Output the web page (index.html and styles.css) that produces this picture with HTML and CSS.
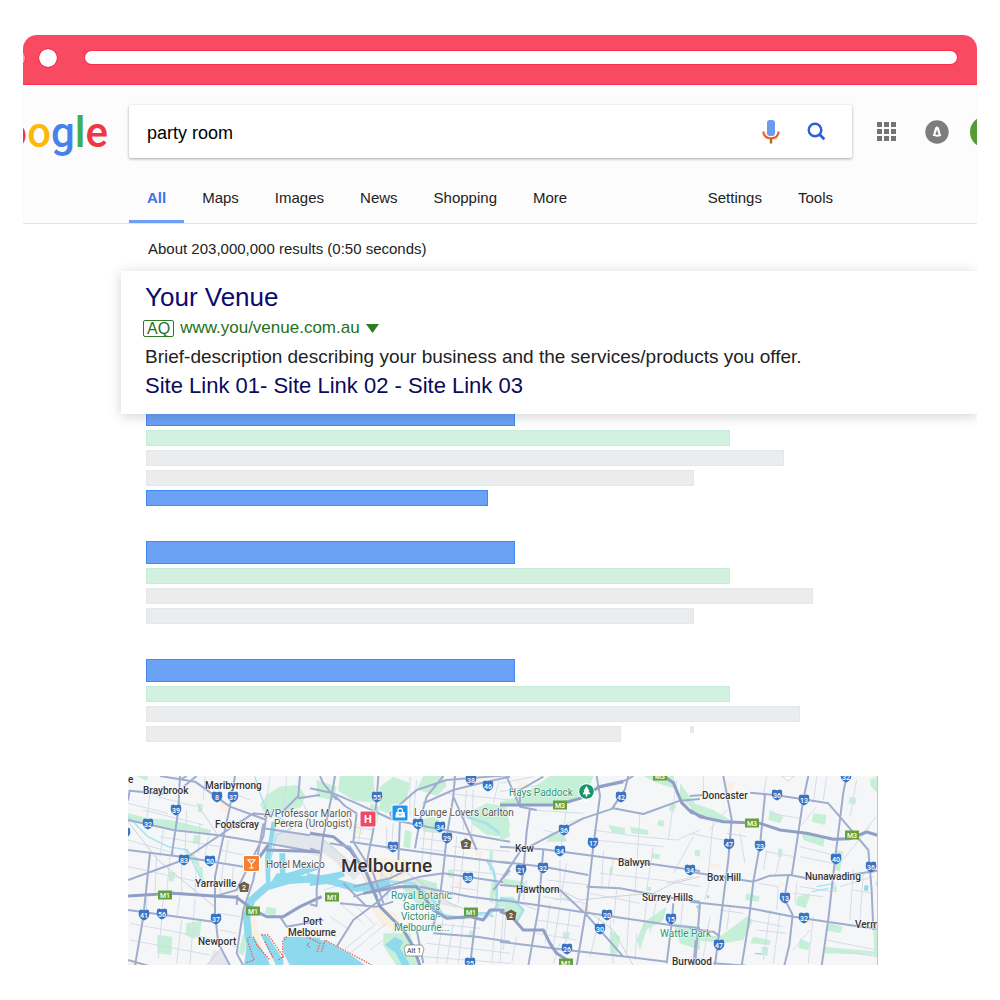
FILE: index.html
```html
<!DOCTYPE html>
<html lang="en">
<head>
  <meta charset="UTF-8" />
  <meta name="viewport" content="width=device-width, initial-scale=1.0" />
  <title>party room</title>
  <link rel="stylesheet" href="styles.css">
</head>
<body>
  <div class="browser">
    <div class="titlebar">
      <span class="dot dot-faded"></span>
      <span class="dot"></span>
      <span class="address"></span>
    </div>

    <header class="header">
      <div class="top">
        <a class="logo" href="#"><span class="red">o</span><span class="yellow">o</span><span class="blue">g</span><span class="green">l</span><span class="red">e</span></a>
        <form class="search">
          <input type="text" aria-label="Search" value="party room" />
          <button type="button" aria-label="Voice search">
            <svg width="18" height="24" viewBox="0 0 18 24">
              <rect x="5" y="0" width="8" height="16" rx="3" fill="#6a9bf0"/>
              <path d="M1.200 11.500c.6 4.600 4 6.800 7.800 6.800s7.200-2.200 7.800-6.800" fill="none" stroke="#f4622d" stroke-width="2.200"/>
              <path d="M9 18.500v5" stroke="#b06a1c" stroke-width="2.400"/>
            </svg>
          </button>
          <button type="button" aria-label="Search">
            <svg width="19" height="20" viewBox="0 0 19 20">
              <circle cx="8" cy="8" r="6.300" fill="none" stroke="#2c5fd8" stroke-width="2.400"/>
              <path d="M12.300 12.300L17.300 17.300" stroke="#2c5fd8" stroke-width="2.800"/>
            </svg>
          </button>
        </form>
        <button class="apps" type="button" aria-label="Apps">
          <svg width="19" height="20" viewBox="0 0 19 20" fill="#737373">
            <path d="M0 0h5v5H0zM7 0h5v5H7zM14 0h5v5h-5zM0 7h5v5H0zM7 7h5v5H7zM14 7h5v5h-5zM0 14h5v5H0zM7 14h5v5H7zM14 14h5v5h-5z"/>
          </svg>
        </button>
        <button class="bell" type="button" aria-label="Notifications">
          <svg width="24" height="24" viewBox="0 0 24 24">
            <circle cx="12" cy="12" r="11.700" fill="#7d7d7d"/>
            <path d="M12 6.500c-1.500 0-2.300 2-2.800 4.500-.3 1.800-.8 3.200-1.500 4.500 1.200.8 2.500 1.200 4.300 1.200s3.100-.4 4.300-1.200c-.7-1.300-1.200-2.700-1.500-4.500-.5-2.500-1.300-4.500-2.800-4.500z" fill="#fff"/>
            <path d="M12 9.500l1.600 5.300h-3.200z" fill="#7d7d7d"/>
          </svg>
        </button>
        <span class="avatar"></span>
      </div>
      <nav class="tabs">
        <a class="active" href="#">All</a>
        <a href="#">Maps</a>
        <a href="#">Images</a>
        <a href="#">News</a>
        <a href="#">Shopping</a>
        <a href="#">More</a>
        <a class="push" href="#">Settings</a>
        <a href="#">Tools</a>
      </nav>
    </header>

    <main>
      <p class="stats">About 203,000,000 results (0:50 seconds)</p>

      <section class="ad">
        <h2><a href="#">Your Venue</a></h2>
        <div class="ad-url">
          <span class="badge">AQ</span>
          <a href="#">www.you/venue.com.au</a>
          <svg width="13" height="9" viewBox="0 0 13 9"><path d="M0 0h13L6.500 9z" fill="#2f7a24"/></svg>
        </div>
        <p>Brief-description describing your business and the services/products you offer.</p>
        <div class="sitelinks"><a href="#">Site Link 01</a>- <a href="#">Site Link 02</a> - <a href="#">Site Link 03</a></div>
      </section>

      <div class="results">
        <div class="result">
          <div class="bar title"></div>
          <div class="bar url"></div>
          <div class="bar text long"></div>
          <div class="bar text short"></div>
          <div class="bar links"></div>
        </div>
        <div class="result">
          <div class="bar title"></div>
          <div class="bar url"></div>
          <div class="bar text longest"></div>
          <div class="bar text short"></div>
        </div>
        <div class="result">
          <div class="bar title"></div>
          <div class="bar url"></div>
          <div class="bar text longer"></div>
          <div class="last-row">
            <div class="bar text shortest"></div>
            <div class="speck"></div>
          </div>
        </div>
      </div>

      <svg class="map" viewBox="128 776 750 189" role="img" aria-label="Map of Melbourne">
        <rect x="128" y="776" width="750" height="189" fill="#f5f6f8"/>

        <!-- west -->
        <g transform="translate(120 770) scale(.3333)">
          <path class="park" d="M420 105l20-30 40-25 55-5 20 30-10 35-50 15-60 5zM24 130l60 15 70 5 120 30-5 10-150-20-95-15zM222 195l20 3-2 25-22-3zM235 100l14 3-4 25-12-3zM148 305l18 3-5 27-15-2zM112 495l45 5-3 55-42-5zM200 460l45-8-6 45-18 10-25-12zM232 290l15 0 5 50-10 5zM370 490l15 15-15 50-15-5zM50 18h35l-5 15zM195 235l40 30 5 30-35-30zM440 410l30 5-5 25-30-10zM590 30l60 20-10 40-50-10z"/>
          <path class="sand" d="M385 430l20 10 30 130-25 10-20-80zM24 572l40 6v10H24zM300 85l25 15-5 30-20-10z"/>
          <path class="urban" d="M465 175l135 25v60l-110-30-40-20zM280 540l25 5 20 42h-60zM520 195h80v30z"/>
          <path class="minor" d="M24 60l100 15M70 120l180 45M90 65l-10 90M110 80l120 30M120 260l10-80M120 200l180 30M200 120l-5 130M240 160l-5 90M255 20l-5 70M265 200l-10 60M24 210l140 40M24 290l140 30 120 25M110 255l-5 110M150 260l-10 110M185 270v100M230 270l-5 100M180 380l-10 65M130 385l-15 180M225 385l-15 200M30 460l240 45M30 510l240 45M80 385v50M185 450l-15 130M300 430l60 10M300 480l50 10M305 520l45 10M310 280l-10 90M340 290l-5 65M24 100l120 30M300 240l70 15M390 90l-50-20M450 20l-15 100M500 20l-10 120M360 150l60 15M325 210l-10 70M545 90l40 90"/>
          <path class="rail" d="M24 155l90 115 175 145M230 100l60 90M300 540l-40 47"/>
          <path class="creek" d="M24 140l60 60 60 30 60 10M405 20l15 50 20 50 50 30 25 25-45 20-15 60-15 80M200 240l30 60 20 40"/>
          <path class="water" d="M438 340l-3-80 12-55 8-50 14 0-10 60-8 50 0 80zM455 335l15-25 10 0-2-60 18 0 0 60 20-5 60-20 24 12-60 20-20 25z"/>
          <path class="river" d="M620 325l-110 5-70 20-45 40-15 50 5 60 20 60"/>
          <path class="water" d="M380 520l20-20 40 60 12 30h-80zM420 490l25 10 45 70 0 20-20 0zM490 500h30l80 3v84h-90l-20-40z"/>
          <path class="dotted" d="M390 500l-8 10 20 60-28 10M400 500l10 25 40 45M425 495l20 0 45 65-15 10M435 515l25 50M500 500l-12 15 0 50M560 500l20 10-20 15 40 30"/>
          <path class="road" d="M24 92l5-30 100 10M120 18l105 17 105 75 110 40M24 150l136 30 130 15 150 25 160 28M180 18l-5 102-20 137M345 18l-15 92-20 90-25 120v110l10 90 35 67M24 240l171 22 175 28M24 330l166-60 110-75 100-65 60 5M24 420l256 35M90 250l-20 190-25 147M24 570l60 17M430 160l-30 170-30 90-20 130 20 37M540 18l-5 60-50 50M600 75l-65 10M280 380l70-20 50-100 30-60 10-70M180 30l20-12M190 50l40-32M480 440l20 30 110-20M430 175l170 25M350 405l2-30"/>
          <path class="highway" d="M24 378l136-8 120 8 70 4 50 38 40 20h50l50-30 65-30M440 240l160 5M390 300l55-75"/>
        </g>

        <!-- city -->
        <g transform="translate(310 770) scale(.3333)">
          <path class="park" d="M90 18h100l5 80-60-5-50-30zM210 50l40-30 50 20-10 50-60 40-20-10zM340 18h60l10 30-30 30-60-20zM330 150l40-10 30 20-10 30-50-5zM470 130l60-30 60 10 10 60-20 30-50-5-40-30zM285 180l20 5-5 50-20-5zM310 320l70 20 10 80-60-10-50-50 0-30zM220 490l80 0 30 97h-70l-40-60zM180 100l30 10-10 60-15-5zM540 240l10 5-5 60-8-5zM555 390l45-5v20l-40 10zM480 480l15 5 0 20-20-5zM545 335l15 5-10 60-12-5zM415 300l15 3-2 20-14-2z"/>
          <path class="sand" d="M140 270l40-10 110 10 10 40-60 40-70-20zM180 410l80 20 10 50-50-10zM130 160l35 5-5 30-30-5zM435 330l25 5-5 20-20-5zM495 240l25 5-5 15-20-5z"/>
          <path class="urban" d="M0 180l60 40 90 90-20 20-60-60-70-50zM300 320l80 60 60 25 0 10-80-20-60-55z"/>
          <path class="minor" d="M230 170v70M250 160l-5 70M345 160l-10 130M370 160l-10 130M440 200l-15 190M465 200l-20 200M430 230l170 15M420 300l180 15M420 350l80 10M330 205l80 10M330 235l80 10M470 60l-10 120M490 60l-5 130M300 20v120M320 30l-10 110M410 70l190 20M130 170l60 10M130 200l60 10M155 160l-10 60M220 290l-20 100M250 290l-20 100M180 290l90 60M90 400l70 60M60 440l60 40M130 400l60 60M100 540l100-80M120 550l110-90M180 540l80-60M400 440l-20 140M430 460l-20 120M460 450l-15 130M360 460l150 15M350 520l250 30M340 560l260 20M560 420l-15 160M580 420l-10 160M40 360l70-20M20 480l60 20M510 260l-10 140M570 20l-20 80"/>
          <path class="rail" d="M40 210l110 90 50 90M280 300l140 100 100 40"/>
          <path class="river" d="M-10 320l80 15 70 20 100-15"/>
          <path class="creek wide" d="M240 335l70 5 50 40 40 55 60 10 30-15 40 0 20 10M470 140l60 20 40 30M530 270l20 30 10 50 0 60-35 35"/>
          <path class="water" d="M0 330l40-15 60-12 5 15-60 25-45 5zM225 525l30-25 25 15-10 20 25 40 8 25-25-10-20-40zM0 503l50 10 70 40 55 40H0z"/>
          <path class="dotted" d="M0 505l30 15-10 30M35 545l10-35 140 75"/>
          <path class="road" d="M75 18l-10 60-25 120-20 160 0 50-20-5M0 55l70 15 70 30 110 50 150 30 200 35M205 18l-5 72-10 90-20 100M80 90l-40-50-10-22M120 215l130 20 150 20 200 25M435 18l-5 62-20 120-10 100-15 120-20 60M400 18l-50 62-20 70-15 85M250 150l-10-20 80-70 90-30 190-15M430 80l40 90 30 70M340 100l90-40 80-20 90-20M130 380l200-60 70-10 200 30M330 350l150 30 120 15M370 490l130 10 100 15M500 420l-20 167M80 530l50-80 80-60M130 350l110-25 60-30M140 130l-10 85 60 95 30 90M270 150l-5 120M90 400l110 10 50-15M100 340l70 70M320 480l20 100M600 300l-50 60M75 78l30 30 35 22"/>
          <path class="highway" d="M0 190l70 10 50 40 50 70 40 100 70 70 30 50 20 57M160 370l110-20 50 0 50 70 40 25 70-5 40 10 20-30 60 0"/>
          <path class="road" d="M60 220l60 10 50 80M200 400l50-50M0 235l30 10"/>
        </g>

        <!-- inner east -->
        <g transform="translate(500 770) scale(.3333)">
          <path class="park" d="M0 95l60-15 90-62h130l-20 60-70 30-90 0-100 0zM430 18h90l10 40-60-20zM0 130l20 10 10 60-30 10zM150 190l45 5 5 20-60 0zM325 165l50 10 0 20-40-10zM390 170l55 10 0 15-50-5zM475 150l18 2-3 18-18-3zM455 250l25 3-3 15-22-3zM190 485l20 3-3 20-20-3zM5 325l70 10 0 15-60 0zM0 380l40 0 30 40-20 30-30-10zM430 460l40-30 30-20-10 40-50 30-20 60-10-30zM520 460l80 10v70l-60-20zM330 480l30 20-10 60-20-10zM540 40l60 80v20l-60-60zM585 240l15 0v20l-15-3zM330 290l10 2-3 20-10-2zM440 350l15 2-2 12-15-2zM510 100l20 5-10 20-14-5zM150 390l60-10 0 10zM590 410l10 0v20l-8-3z"/>
          <path class="sand" d="M245 400l25 5-5 20-22-3zM50 30l35 10-5 20-25-5z"/>
          <path class="minor" d="M200 110l-20 150M200 160l95-30M90 120l160 10M420 130l-15 240M280 180l140 20 110 10 70-30M310 240l-5 120M340 270l-15 80M530 30l-25 180M280 210l210 20M460 230l-20 130M300 310l180 20 120 20M130 180l60 15M180 270v110M200 280l-20 120M140 330l130 15M80 330l-10 60M130 380l130 20M390 370l-10 180M440 390l-10 100M350 360l-10 100M270 370l150 30M330 450l10 130M300 440l-30 120M60 400l50 20M150 400l-15 120M180 410l-20 120M210 420l-15 120M110 450l130 20M110 490l120 20M470 390l-20 100M550 380l-10 110M20 410l-10 130M50 500l-15 80M410 490l-5 80M500 340l80-20M580 200l-60 110M0 40l100-20M0 65l120-20M180 520l-20 60"/>
          <path class="rail" d="M70 350l110 10 60 30 100-10 120-10 60-30 80-20M260 420l80 60 60 107"/>
          <path class="creek wide" d="M0 385l40 5 30 30-20 35"/>
          <path class="road" d="M0 230l130 8 225 30 245 35M0 275l130 15 135 25M90 115l-10 70-10 120-15 90M130 238l-15 180-30 169M0 335l60-90 190-100 90-30 90 17 110-40 60-5M290 18l10 60-20 150-20 180-30 179M0 345l180 15 80 75 110 125M0 390l110 15 130 20 270 40 90 10M260 350l100 5 160 30 80 10M0 515l200 25 180 20 120 15M520 400l-5 60-15 120M590 480l-10 107M290 50l90-20 20-12M385 18l-10 40-40 60M20 20l40 90 50 10M60 100l0-40 70-40"/>
          <path class="highway" d="M0 105l170 0 70-20 60-35 70-15M0 425l30 10 40 45 60 0 20 40 20 30 40 25M490 18l30 20 25 60 30 30 40 10"/>
        </g>

        <!-- outer east -->
        <g transform="translate(690 770) scale(.3333)">
          <path class="park" d="M10 100l60 20 60 35-40 0-80-30zM370 130l40 5-5 30-40-10zM335 190l70 15-5 25-60-20zM90 500l80-60 20 10-30 60-60 10-90-10 0-20zM190 500l50 10 0 15-60-5zM215 530l20 2-3 25-17-3zM322 380l40-10-15 45-30-10zM420 460l40 10-10 20-45-10zM400 530l163 15v10l-163-5zM265 235l13 2-2 25-13-2zM170 370l40 10-5 15-40-5zM440 240l20 5-10 60-15-5zM480 80l20 5-5 20-20-5zM540 30l20-12 2 50-20-20zM240 120l40 20-10 20-35-10zM330 505l30 15-5 20-30-5zM550 480l13 2v80l-10 0zM430 345l10 2 0 20-10-2z"/>
          <path class="sand" d="M110 35l22 5-5 25-20-5zM60 280l30 4-5 10-25-4zM350 445l20 5-5 15-20-5zM270 335l15 5-5 10-14-4zM545 18l15 2-5 8z"/>
          <path class="minor" d="M70 150l-15 160M150 190l15 90M110 190l60 10M60 180l50-60M0 190l100 20M230 240l-10 60M270 260l-15 60M225 245l90 15M330 230l100 25M330 260l100 20M205 340l60 10-5 70M310 370l90 10M320 340l-5 60M330 350l100 15M370 440l-15 140M240 420l-20 150M270 430l-20 150M200 480l90 10M120 410l-10 70M60 330l-15 60M90 420l70 10M180 450l100 20M360 480l-50 60M430 540l130 20M410 510l150 30M490 300l-10 150M520 310l-10 140M490 360l60 10M380 110l-50 60M230 20l-10 60M240 130l90 15M540 170l-90 110M560 140l-60 70M450 350l100-30M60 440l-20 120M40 20v60M410 20l-10 70M380 20l-10 80M500 30l-20 110M0 560l60 10"/>
          <path class="creek" d="M365 365l50-10M380 350l55-10"/>
          <path class="water" d="M524 345l12 3-3 16-11-3zM20 405l8 2-3 8-6-2zM52 375l6 2-1 8-6-1zM195 548l20 2v4l-20-2z"/>
          <path class="road" d="M0 78l40-3M180 68l80 8 80 12 75 12 60 70 60 70 10 120 5 120M100 18l25 130-10 120-25 200-15 117M225 75l-15 150-20 110-15 130-20 122M355 18l-15 70-15 100-20 130M470 18l-10 50-25 200-20 180-20 139M0 305l60 10 130 20 50-18 60-2 50 10 90-5 123-18M0 395l180 20 130 25 100 15 150 22M295 315l-12 70 25 50-10 90-15 62M30 400l-15 187M0 475l70 10 20 15M70 580l100 7"/>
          <path class="highway" d="M0 120l30 20 70 15 110 5 60 20 80 10 80 18 50-2 50-20 33 10"/>
        </g>

        <g class="labels">
          <text x="128" y="783">e</text>
          <text x="143" y="794">Braybrook</text>
          <text x="205" y="789">Maribyrnong</text>
          <text x="215" y="828">Footscray</text>
          <text x="195" y="887">Yarraville</text>
          <text x="198" y="945">Newport</text>
          <text x="303" y="925">Port</text>
          <text x="288" y="936">Melbourne</text>
          <text x="515" y="852">Kew</text>
          <text x="516" y="893">Hawthorn</text>
          <text x="618" y="866">Balwyn</text>
          <text x="642" y="901">Surrey Hills</text>
          <text x="702" y="799">Doncaster</text>
          <text x="707" y="881">Box Hill</text>
          <text x="805" y="880">Nunawading</text>
          <text x="855" y="928">Verm</text>
          <text x="672" y="965">Burwood</text>
          <text class="city" x="341" y="872">Melbourne</text>
          <g class="place">
            <text x="264" y="817">A/Professor Marlon</text>
            <text x="274" y="827">Perera (Urologist)</text>
            <text x="266" y="868">Hotel Mexico</text>
            <text x="414" y="816">Lounge Lovers Carlton</text>
          </g>
          <g class="green-place">
            <text x="509" y="796">Hays Paddock</text>
            <text x="391" y="899">Royal Botanic</text>
            <text x="403" y="910">Gardens</text>
            <text x="401" y="920">Victoria -</text>
            <text x="394" y="931">Melbourne...</text>
            <text x="660" y="937">Wattle Park</text>
          </g>
        </g>

        <g id="shields"></g>

        <g>
          <path d="M406 945h16l2 4-2 7h-16l-2-7z" fill="#fff" stroke="#777" stroke-width=".7"/>
          <text class="alt" x="414" y="953">Alt 1</text>
          <rect x="359.500" y="810.500" width="17" height="17" rx="2" fill="#fff"/>
          <rect x="360.500" y="811.500" width="15" height="15" rx="1" fill="#f04866"/>
          <text class="hospital" x="368" y="823">H</text>
          <rect x="391.500" y="804.500" width="17" height="17" rx="2" fill="#fff"/>
          <rect x="392.500" y="805.500" width="15" height="15" rx="1" fill="#1897f2"/>
          <path d="M396 812h8.500l.8 5.500h-10z" fill="#fff"/>
          <path d="M398 812v-1.500a2.200 2.200 0 014.400 0v1.500" fill="none" stroke="#fff" stroke-width="1.200"/>
          <path d="M398.400 813.500c.6 2 3 2 3.600 0" fill="none" stroke="#1897f2" stroke-width=".8"/>
          <rect x="243" y="855" width="17" height="17" rx="2" fill="#fff"/>
          <rect x="244" y="856" width="15" height="15" rx="1" fill="#f58233"/>
          <path d="M248 859.800h7l-3.500 4zM251.500 863.500v4.500M249.300 868h4.400" fill="none" stroke="#fff" stroke-width="1.100"/>
          <path d="M586.500 803l-4-5h8z" fill="#fff"/>
          <circle cx="586.500" cy="791.500" r="8.300" fill="#fff"/>
          <circle cx="586.500" cy="791.500" r="7.300" fill="#15976b"/>
          <path d="M586.500 786l3 5h-1l2 3.300h-3.200v2.200h-1.600v-2.200h-3.200l2-3.300h-1z" fill="#fff"/>
          <path d="M782 776h12l-6 5z" fill="#fff" stroke="#bbb" stroke-width=".6"/>
          <path d="M877.500 776v189" stroke="#a8dba8"/>
        </g>
      </svg>
    </main>
  </div>

  <script>
    // [x, y, route number]
    const routes = [
      [217, 797, 8], [233, 797, 37], [176, 810, 39], [148, 824, 32], [184, 860, 83], [210, 861, 50],
      [144, 915, 41], [162, 914, 56], [216, 919, 37], [377, 797, 55], [471, 780, 38], [488, 786, 46],
      [418, 824, 45], [440, 827, 34], [447, 838, 29], [393, 847, 32], [468, 878, 30], [564, 830, 36],
      [621, 797, 42], [593, 843, 17], [560, 851, 34], [521, 870, 21], [543, 868, 32], [607, 915, 20],
      [600, 929, 30], [567, 949, 26], [470, 963, 25], [690, 870, 34], [671, 919, 15], [777, 795, 36],
      [804, 800, 13], [846, 777, 32], [729, 844, 47], [760, 846, 23], [836, 859, 40], [871, 867, 36],
      [785, 898, 13], [804, 918, 32], [719, 945, 47], [125, 833, ''], [882, 885, '']
    ];
    const motorways = [
      [165, 895, 'M1'], [253, 911, 'M1'], [332, 897, 'M1'], [471, 912, 'M1'], [566, 963, 'M1'],
      [560, 805, 'M3'], [752, 823, 'M3'], [852, 835, 'M3'], [660, 776, 'M3']
    ];
    const tourist = [[244, 887, 2], [466, 844, 2], [511, 915, 2]];

    function draw(list, shape, cls) {
      return list.map(([x, y, label]) =>
        `<g class="${cls}" transform="translate(${x} ${y})"><path d="${shape}"/><text y="3">${label}</text></g>`
      ).join('');
    }

    document.getElementById('shields').innerHTML =
      draw(routes, 'M-5-4.500L-3-5.500L0-4.800L3-5.500L5-4.500L5.300 0Q4.500 3.500 0 5.500Q-4.500 3.500-5.300 0z', 'route') +
      draw(motorways, 'M-7-4.500H7v9H-7z', 'motorway') +
      draw(tourist, 'M0-5.500L5.500-2.500L4 5H-4L-5.500-2.500z', 'tourist');
  </script>
</body>
</html>
```
FILE: styles.css
```css
* { box-sizing: border-box; margin: 0; padding: 0; }
body { font-family: "Liberation Sans", Arial, sans-serif; background: #fff; color: #222; padding: 35px 23px; }
a { color: inherit; text-decoration: none; }
button { border: none; background: none; cursor: pointer; }
svg { display: block; }

.browser { overflow: hidden; border-radius: 14px 14px 0 0; }

.titlebar { height: 50px; background: #f84b62; border-bottom: 1px solid #fa2d4b; display: flex; align-items: center; padding: 0 20px 4px 0; }
.dot { width: 20px; height: 20px; border-radius: 50%; background: #fff; border: 1px solid #fa2d4b; background-clip: padding-box; }
.dot-faded { background: #fba0ab; margin: 0 12px 0 -17px; }
.address { flex: 1; height: 13px; margin-left: 27px; border-radius: 7px; background: #fff; box-shadow: 0 0 0 1px #fa2d4b; }

.header { background: #fcfcfc; border-bottom: 1px solid #e4e4e4; padding-top: 20px; }
.top { display: flex; align-items: center; }
.logo { width: 85px; padding-top: 3px; display: flex; justify-content: flex-end; font-family: Roboto, sans-serif; font-weight: 500; font-size: 42px; line-height: 50px; }
.blue { color: #4682e8; }
.red { color: #ee3840; }
.yellow { color: #fdb90a; }
.green { color: #3fae55; }

.search { flex: 1; height: 53px; margin: 0 25px 0 21px; padding: 0 26px 0 18px; display: flex; align-items: center; background: #fff; border-radius: 2px; box-shadow: 0 1px 3px rgba(0,0,0,0.35); }
.search input { flex: 1; min-width: 0; padding-top: 3px; border: none; outline: none; background: none; font-family: inherit; font-size: 18px; color: #000; }
.search button { margin-left: 27px; }
.bell { margin: 0 21px 0 29px; }
.avatar { width: 32px; height: 32px; margin-right: -25px; border-radius: 50%; background: #559a33; }

.tabs { display: flex; margin: 15px 126px 0 106px; font-size: 15px; }
.tabs a { padding: 0 18px; line-height: 50px; }
.tabs .active { color: #3c74e6; font-weight: bold; box-shadow: inset 0 -3px #6a9ff5; }
.tabs .push { margin-left: auto; }

.stats { padding: 15px 0 0 125px; font-size: 15px; line-height: 20px; height: 47px; }

.ad { position: relative; margin-left: 98px; padding: 10px 24px 13px; background: #fff; box-shadow: 0 2px 12px rgba(0,0,0,0.18); }
.ad h2 { font-size: 26px; font-weight: normal; line-height: 32px; color: #0a0a70; }
.ad-url { display: flex; align-items: center; gap: 6px; margin-left: -2px; font-size: 17px; line-height: 30px; color: #26701c; }
.badge { border: 1px solid #2f7a24; border-radius: 2px; padding: 0 3px; font-size: 16px; line-height: 15px; }
.ad p { font-size: 19px; line-height: 28px; }
.sitelinks { font-size: 22px; line-height: 30px; color: #0a0a5c; }

.results { margin: -11px 0 32px 123px; display: flex; flex-direction: column; gap: 35px; }
.result { display: flex; flex-direction: column; gap: 4px; }
.bar { height: 16px; max-width: 100%; }
.title, .links { background: #6ca2f5; border: 1px solid #4488f2; }
.title { height: 23px; width: 369px; }
.links { width: 342px; }
.url { width: 584px; background: #d3f1df; border: 1px solid #c8ecd7; }
.text { background: #ebeced; border: 1px solid #e6e7e8; }
.long { width: 638px; }
.longer { width: 654px; }
.longest { width: 667px; }
.short { width: 548px; }
.shortest { width: 475px; }
.last-row { display: flex; }
.speck { width: 4px; height: 7px; margin-left: 69px; background: #e8e8e8; }

.map { width: 750px; max-width: 100%; margin: 34px 0 0 105px; font-family: Roboto, sans-serif; }
.park { fill: #c5efd6; }
.sand { fill: #faf0df; }
.urban { fill: #e3e6ea; }
.water { fill: #8fd9ee; }
.river, .creek, .road, .highway, .minor, .rail, .dotted { fill: none; stroke-linejoin: round; }
.river { stroke: #8fd9ee; stroke-width: 22; }
.creek { stroke: #a5e1ef; stroke-width: 4; }
.creek.wide { stroke-width: 8; }
.minor { stroke: #d5dce9; stroke-width: 3; }
.rail { stroke: #cfd1d5; stroke-width: 3; }
.road { stroke: #a0adcf; stroke-width: 6; }
.highway { stroke: #909fc5; stroke-width: 9; }
.dotted { stroke: #e85a50; stroke-width: 4; stroke-dasharray: 4 4; }

.labels text { font-size: 10px; font-weight: 500; fill: #333; stroke: #fff; stroke-width: 1px; stroke-linejoin: round; paint-order: stroke; }
.labels .city { font-size: 19px; }
.labels .place text { font-weight: 400; fill: #555; }
.labels .green-place text { font-weight: 400; fill: #2a9170; }
.route path { fill: #3974c4; }
.motorway path { fill: #64a03c; }
.tourist path { fill: #6e6046; }
.route text, .motorway text, .tourist text { font-size: 7px; font-weight: 500; fill: #fff; text-anchor: middle; }
.alt { font-size: 7px; fill: #333; text-anchor: middle; }
.hospital { font-size: 11px; font-weight: 700; fill: #fff; text-anchor: middle; }
```
